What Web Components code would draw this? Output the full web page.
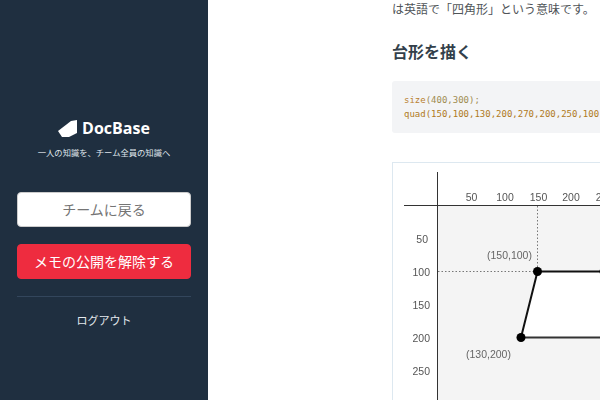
<!DOCTYPE html>
<html lang="ja">
<head>
<meta charset="utf-8">
<title>DocBase</title>
<style>
    html, body { margin: 0; height: 100%; overflow: hidden; }
    body {
        display: flex;
        font-family: "Open Sans", "Noto Sans CJK JP", sans-serif;
        text-spacing-trim: space-all;
    }
</style>
</head>
<body>
<doc-sidebar>
    <doc-logo></doc-logo>
    <doc-button>チームに戻る</doc-button>
    <doc-button kind="danger">メモの公開を解除する</doc-button>
    <a slot="foot">ログアウト</a>
</doc-sidebar>
<doc-main>
    <p>は英語で「四角形」という意味です。</p>
    <h2>台形を描く</h2>
    <doc-code></doc-code>
    <doc-figure></doc-figure>
</doc-main>

<script>
class docSidebar extends HTMLElement {
    constructor() {
        super();
        this.attachShadow({mode: 'open'});
        this.shadowRoot.innerHTML = `
            <style>
                :host {
                    box-sizing: border-box;
                    flex: 0 0 208px;
                    height: 400px;
                    padding: 118px 17px 0;
                    background-color: #1f2f40;
                    display: flex;
                    flex-direction: column;
                }
                .foot {
                    padding-top: 15px;
                    border-top: 1px solid #33465c;
                    text-align: center;
                    font-size: 11px;
                    line-height: 18px;
                    color: #e4e9ee;
                }
            </style>
            <slot></slot>
            <div class="foot"><slot name="foot"></slot></div>
        `;
    }
}

class docLogo extends HTMLElement {
    constructor() {
        super();
        this.attachShadow({mode: 'open'});
        this.shadowRoot.innerHTML = `
            <style>
                :host {
                    display: flex;
                    flex-direction: column;
                    align-items: center;
                    margin-bottom: 33px;
                    color: #fff;
                }
                .mark {
                    display: flex;
                    align-items: center;
                    gap: 5px;
                    height: 20px;
                    font-family: "Open Sans", sans-serif;
                    font-size: 16px;
                    font-weight: 700;
                }
                .tag {
                    margin-top: 9px;
                    font-size: 8.3px;
                    line-height: 12px;
                    color: #dfe4ea;
                }
            </style>
            <div class="mark">
                <svg width="19" height="17" viewBox="0 0 19 17">
                    <path d="M0 11 L13 1 L19 0 L19 13 L11 17 L4 17 Z" fill="#fff"/>
                </svg>
                <span>DocBase</span>
            </div>
            <div class="tag">一人の知識を、チーム全員の知識へ</div>
        `;
    }
}

class docButton extends HTMLElement {
    constructor() {
        super();
        this.attachShadow({mode: 'open'});
        this.shadowRoot.innerHTML = `
            <style>
                :host {
                    box-sizing: border-box;
                    display: block;
                    height: 35px;
                    margin-bottom: 17px;
                    border-radius: 4px;
                    border: 1px solid #ccc;
                    background-color: #fff;
                    color: #757575;
                    font-size: 14px;
                    line-height: 33px;
                    text-align: center;
                }
                :host([kind="danger"]) {
                    background-color: #ee2c3f;
                    border-color: #ee2c3f;
                    color: #fff;
                }
            </style>
            <slot></slot>
        `;
    }
}

class docMain extends HTMLElement {
    constructor() {
        super();
        this.attachShadow({mode: 'open'});
        this.shadowRoot.innerHTML = `
            <style>
                :host {
                    flex: 1;
                    min-width: 0;
                    height: 400px;
                    overflow: hidden;
                    padding-left: 184px;
                    background-color: #fff;
                    color: #4f5458;
                }
                ::slotted(p) {
                    margin: 1px 0 0;
                    font-size: 12px;
                    line-height: 18px;
                    white-space: nowrap;
                }
                ::slotted(h2) {
                    margin: 21px 0 0;
                    font-size: 16px;
                    line-height: 24px;
                    font-weight: 700;
                    color: #333f4b;
                    white-space: nowrap;
                }
            </style>
            <slot></slot>
        `;
    }
}

class docCode extends HTMLElement {
    constructor() {
        super();
        this.attachShadow({mode: 'open'});
        this.shadowRoot.innerHTML = `
            <style>
                :host {
                    box-sizing: border-box;
                    display: block;
                    width: 260px;
                    height: 52px;
                    margin-top: 17px;
                    padding: 13px 12px;
                    border-radius: 3px;
                    background-color: #f3f4f6;
                    font-family: "DejaVu Sans Mono", monospace;
                    font-size: 9px;
                    line-height: 13.5px;
                    color: #b07a22;
                }
                div { white-space: pre; }
                .args { color: #a08c50; }
                .fn { color: #b97f2e; }
            </style>
            <div><span class="fn">size</span><span class="args">(400,300);</span></div>
            <div>quad(150,100,130,200,270,200,250,100);</div>
        `;
    }
}

class docFigure extends HTMLElement {
    constructor() {
        super();
        this.attachShadow({mode: 'open'});
        this.shadowRoot.innerHTML = `
            <style>
                :host {
                    box-sizing: border-box;
                    display: block;
                    width: 300px;
                    height: 300px;
                    margin-top: 29px;
                    border: 1px solid #dde8f0;
                }
                svg {
                    display: block;
                    font-family: "Liberation Sans", sans-serif;
                    font-size: 10.5px;
                    fill: #555;
                    filter: blur(0.25px);
                }
                .note { fill: #666; }
            </style>
            <svg width="298" height="298" viewBox="393 163 298 298">
                <rect x="438" y="205" width="260" height="260" fill="#f4f4f4"/>
                <polygon points="537.5,271.5 521,338 617,338 604,271.5" fill="#fff"/>
                <path d="M437.5 172 V460 M404 205.5 H700" stroke="#333" fill="none"/>
                <path d="M537.5 206 V271 M438 271.5 H537" stroke="#777" stroke-dasharray="1.5 2" fill="none"/>
                <path d="M537.5 271.5 L521 337.5 M537.5 271.5 H604 L617 337.5" stroke="#111" stroke-width="2" fill="none"/>
                <path d="M521 337.5 H617" stroke="#333" stroke-width="2" fill="none"/>
                <circle cx="537.5" cy="271.5" r="4.5" fill="#000"/>
                <circle cx="521" cy="337.5" r="4.5" fill="#000"/>
                <circle cx="604" cy="271.5" r="4.5" fill="#000"/>
                <text x="471.5" y="201" text-anchor="middle">50</text>
                <text x="505" y="201" text-anchor="middle">100</text>
                <text x="538.5" y="201" text-anchor="middle">150</text>
                <text x="571" y="201" text-anchor="middle">200</text>
                <text x="604.5" y="201" text-anchor="middle">250</text>
                <text x="428" y="243" text-anchor="end">50</text>
                <text x="430" y="275.5" text-anchor="end">100</text>
                <text x="430" y="309" text-anchor="end">150</text>
                <text x="430" y="342" text-anchor="end">200</text>
                <text x="430" y="375" text-anchor="end">250</text>
                <text class="note" x="487" y="259">(150,100)</text>
                <text class="note" x="466" y="358">(130,200)</text>
            </svg>
        `;
    }
}

window.customElements.define('doc-sidebar', docSidebar);
window.customElements.define('doc-logo', docLogo);
window.customElements.define('doc-button', docButton);
window.customElements.define('doc-main', docMain);
window.customElements.define('doc-code', docCode);
window.customElements.define('doc-figure', docFigure);
</script>
</body>
</html>
